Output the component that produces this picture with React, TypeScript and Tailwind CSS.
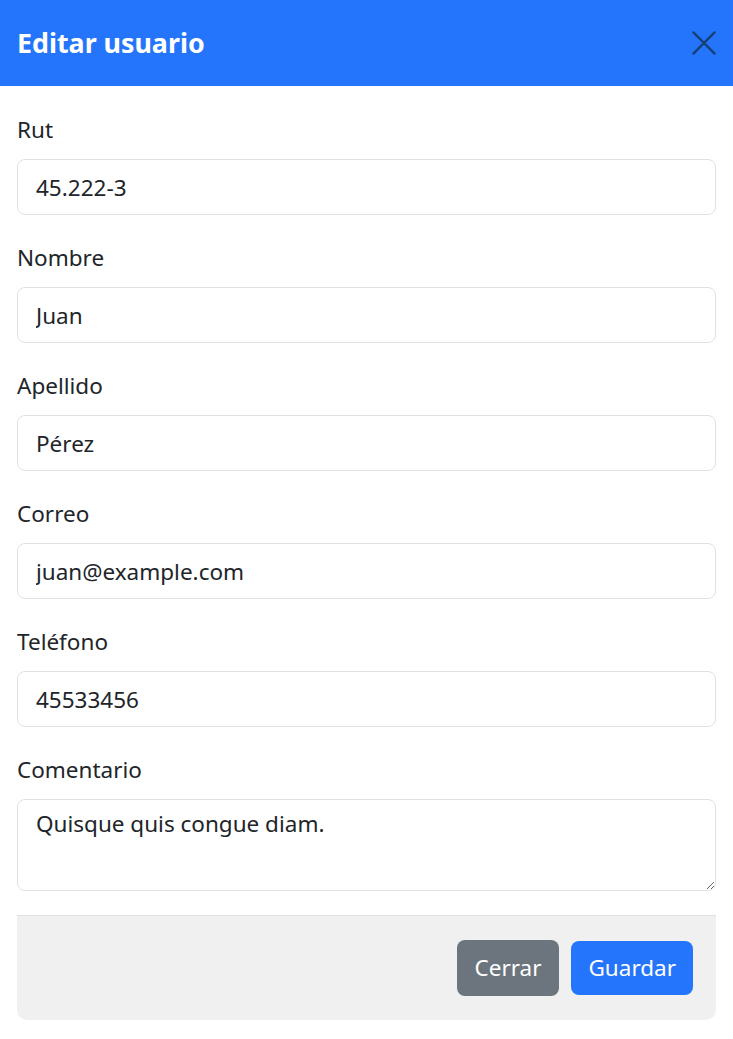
import { useState } from "react";

const fields = [
    { label: "Rut", value: "45.222-3" },
    { label: "Nombre", value: "Juan" },
    { label: "Apellido", value: "Pérez" },
    { label: "Correo", value: "juan@example.com" },
    { label: "Teléfono", value: "45533456" },
];

const App = () => {
    const [form, setForm] = useState(fields.map((f) => f.value));
    const [comentario, setComentario] = useState("Quisque quis congue diam.");

    return (
        <div className="min-h-screen bg-white font-['Noto_Sans',sans-serif] text-[#212529]">
            <div className="flex items-center justify-between h-[86px] bg-[#2575fc] pl-[17px] pr-[16px]">
                <h1 className="text-[26.8px] font-bold text-white">Editar usuario</h1>
                <button className="w-[26px] h-[26px] text-[#17407a]">
                    <svg viewBox="0 0 16 16" className="w-[26px] h-[26px]" fill="none" stroke="currentColor" strokeWidth="1.5" strokeLinecap="round">
                        <path d="M1.5 1.5l13 13M14.5 1.5l-13 13" />
                    </svg>
                </button>
            </div>

            <div className="px-[17px] pt-[28px]">
                {fields.map((f, i) => (
                    <div key={f.label} className="mb-[27px]">
                        <label className="block text-[22.5px] leading-[32px] mb-[13px]">{f.label}</label>
                        <input
                            value={form[i]}
                            onChange={(e) => setForm(form.map((v, j) => (j === i ? e.target.value : v)))}
                            className="block w-full h-[56px] px-[18px] text-[22.5px] border border-[#dee2e6] rounded-[8px] outline-none"
                        />
                    </div>
                ))}
                <div>
                    <label className="block text-[22.5px] leading-[32px] mb-[13px]">Comentario</label>
                    <textarea
                        value={comentario}
                        onChange={(e) => setComentario(e.target.value)}
                        className="block w-full h-[92px] px-[18px] py-[7px] text-[22.5px] border border-[#dee2e6] rounded-[8px] outline-none resize-y"
                    />
                </div>

                <div className="mt-[24px] flex justify-end gap-[12px] h-[105px] items-center pr-[23px] bg-[#f0f0f0] border-t border-[#dee2e6] rounded-b-[10px]">
                    <button className="h-[56px] px-[18px] text-[22.5px] text-white bg-[#6c757d] rounded-[8px]">Cerrar</button>
                    <button className="h-[54px] px-[17px] text-[22.5px] text-white bg-[#2575fc] rounded-[8px]">Guardar</button>
                </div>
            </div>
        </div>
    );
};

export default App;
